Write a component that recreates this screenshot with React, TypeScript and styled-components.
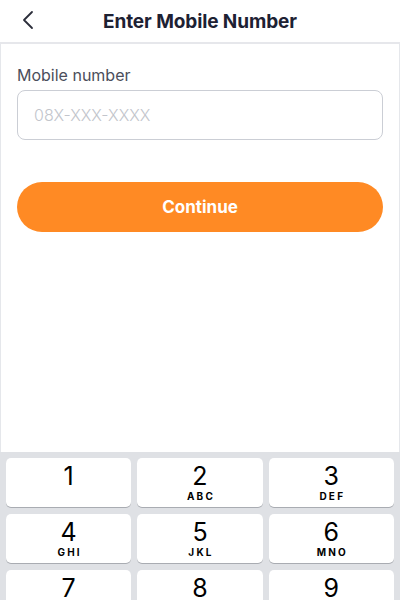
import React from "react";
import styled, { createGlobalStyle } from "styled-components";

const GlobalStyle = createGlobalStyle`
  html, body {
    margin: 0;
    padding: 0;
    background: #ffffff;
    font-family: Inter, "Noto Sans", sans-serif;
  }
  * { box-sizing: border-box; }
`;

const keys = [
  { digit: "1", letters: "" },
  { digit: "2", letters: "ABC" },
  { digit: "3", letters: "DEF" },
  { digit: "4", letters: "GHI" },
  { digit: "5", letters: "JKL" },
  { digit: "6", letters: "MNO" },
  { digit: "7", letters: "PQRS" },
  { digit: "8", letters: "TUV" },
  { digit: "9", letters: "WXYZ" },
];

const App = () => {
  const [value, setValue] = React.useState("");

  return (
    <Screen>
      <GlobalStyle />
      <Header>
        <BackButton aria-label="Back">
          <svg width="12" height="20" viewBox="0 0 12 20" fill="none">
            <path d="M10 2 L2 10 L10 18" stroke="#2b2d3a" strokeWidth="1.8" strokeLinecap="round" strokeLinejoin="round" />
          </svg>
        </BackButton>
        <Title>Enter Mobile Number</Title>
      </Header>
      <Content>
        <Label>Mobile number</Label>
        <PhoneInput
          value={value}
          onChange={(e) => setValue(e.target.value)}
          placeholder="08X-XXX-XXXX"
        />
        <ContinueButton>Continue</ContinueButton>
      </Content>
      <Keypad>
        {keys.map((k) => (
          <Key key={k.digit} onClick={() => setValue(value + k.digit)}>
            <Digit>{k.digit}</Digit>
            <Letters>{k.letters}</Letters>
          </Key>
        ))}
      </Keypad>
    </Screen>
  );
};

const Screen = styled.div`
  width: 400px;
  height: 600px;
  display: flex;
  flex-direction: column;
  overflow: hidden;
  background: #e5e7eb;
`;

const Header = styled.div`
  height: 44px;
  background: #ffffff;
  display: flex;
  align-items: center;
  justify-content: center;
  position: relative;
  border-bottom: 2px solid #e6e7eb;
  flex-shrink: 0;
`;

const BackButton = styled.button`
  position: absolute;
  left: 22px;
  top: 10px;
  background: none;
  border: none;
  padding: 0;
  display: flex;
  cursor: pointer;
`;

const Title = styled.h1`
  margin: 0;
  font-size: 19px;
  font-weight: 700;
  color: #1d2133;
  letter-spacing: -0.1px;
`;

const Content = styled.div`
  flex: 1;
  background: #ffffff;
  margin: 0 1px;
  padding: 21px 16px 0;
  display: flex;
  flex-direction: column;
`;

const Label = styled.label`
  font-size: 16px;
  line-height: 20px;
  color: #4b4e5b;
  margin-bottom: 5px;
`;

const PhoneInput = styled.input`
  height: 50px;
  border: 1px solid #cbced5;
  border-radius: 8px;
  padding: 0 16px;
  font-family: Inter, "Noto Sans", sans-serif;
  font-size: 16px;
  font-weight: 300;
  color: #1d2133;
  outline: none;

  &::placeholder {
    color: #c2c5cc;
  }
`;

const ContinueButton = styled.button`
  margin-top: 42px;
  height: 50px;
  border: none;
  border-radius: 25px;
  background: #ff8a24;
  color: #ffffff;
  font-family: Inter, "Noto Sans", sans-serif;
  font-size: 17px;
  font-weight: 700;
  cursor: pointer;
`;

const Keypad = styled.div`
  height: 148px;
  flex-shrink: 0;
  background: #dfe1e5;
  padding: 6px 6px 0;
  display: grid;
  grid-template-columns: repeat(3, 1fr);
  grid-auto-rows: 49px;
  column-gap: 6px;
  row-gap: 7px;
`;

const Key = styled.button`
  background: #ffffff;
  border: none;
  border-radius: 5px;
  box-shadow: 0 1px 0 #a9acb2;
  display: flex;
  flex-direction: column;
  align-items: center;
  justify-content: flex-start;
  padding: 4px 0 0;
  cursor: pointer;
`;

const Digit = styled.span`
  font-family: Inter, "Noto Sans", sans-serif;
  font-size: 25px;
  font-weight: 400;
  line-height: 28px;
  color: #000000;
`;

const Letters = styled.span`
  font-family: Inter, "Noto Sans", sans-serif;
  font-size: 10px;
  font-weight: 700;
  letter-spacing: 2.2px;
  line-height: 12px;
  color: #000000;
  margin-left: 2px;
`;

export default App;
